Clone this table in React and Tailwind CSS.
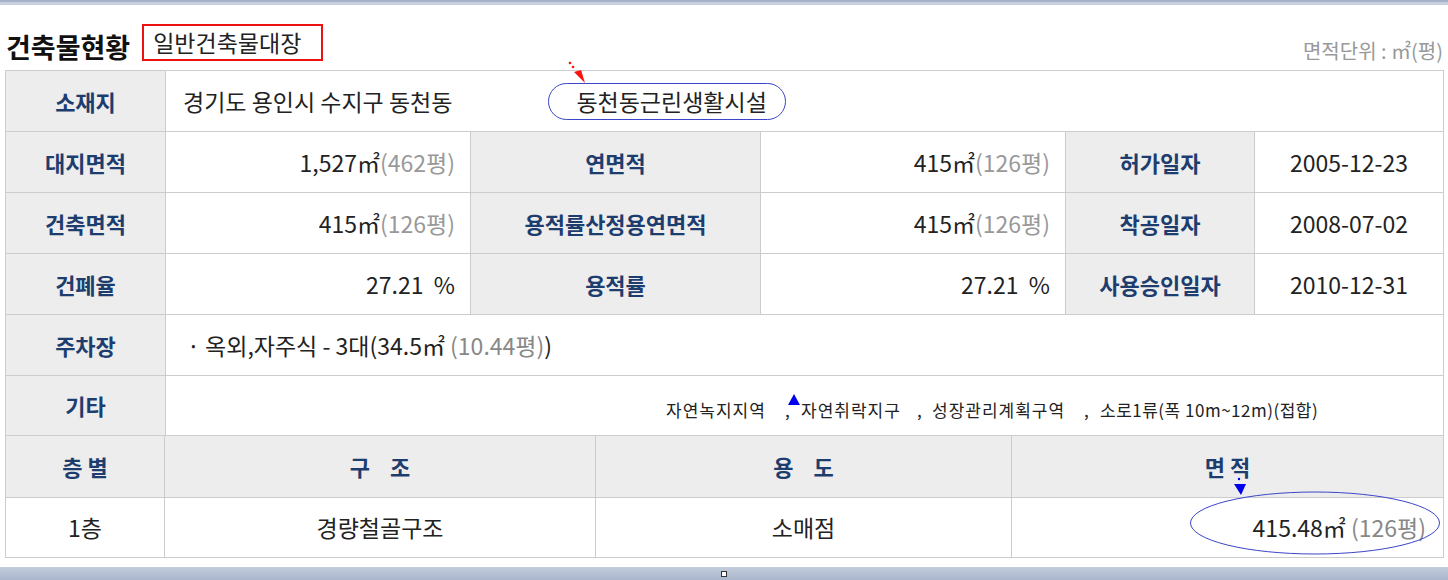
import React from 'react';

const FONT = { fontFamily: '"Noto Sans CJK KR", "Noto Sans", sans-serif' };

const Th = ({ children, className = '', ...rest }) => (
    <td {...rest} className={`border border-[#cccccc] bg-[#ededed] text-center text-[22px] font-bold text-[#1d3d6f] ${className}`}>
        {children}
    </td>
);

const Td = ({ children, className = '', ...rest }) => (
    <td {...rest} className={`border border-[#cccccc] bg-white text-[23px] text-[#222222] ${className}`}>
        {children}
    </td>
);

const Area = ({ m2, py }) => (
    <>
        {m2}㎡<span className="text-[#999999]">({py}평)</span>
    </>
);

const Annotations = () => (
    <svg className="pointer-events-none absolute left-0 top-0" width="1448" height="580">
        {/* red dotted arrow */}
        <circle cx="570" cy="63" r="1.3" fill="#ff1010" />
        <circle cx="573" cy="67" r="1.3" fill="#ff1010" />
        <polygon points="574,72 581,70 585,83" fill="#ff1010" />
        {/* ellipse around 동천동근린생활시설 */}
        <rect x="548.5" y="83.5" width="237" height="36" rx="18" ry="18" fill="none" stroke="#3b45c9" strokeWidth="1" />
        {/* blue triangle in 기타 */}
        <polygon points="794,394 788,405 800,405" fill="#0000ee" />
        {/* blue arrow to area */}
        <circle cx="1239" cy="479" r="1.2" fill="#0000ee" />
        <polygon points="1234,484 1246,484 1241,495" fill="#0000ee" />
        {/* ellipse around area */}
        <ellipse cx="1315" cy="523" rx="124.5" ry="31" fill="none" stroke="#3b45c9" strokeWidth="1" />
    </svg>
);

const App = () => {
    return (
        <div className="relative h-[580px] w-[1448px] overflow-hidden bg-white" style={FONT}>
            {/* top strip */}
            <div className="h-[2px] bg-[#a4b1c7]" />
            <div className="h-[3px] bg-[#c6cfdd]" />

            <div className="px-[5px]">
                {/* title row */}
                <div className="flex h-[65px] items-end justify-between pb-[10px]">
                    <div className="flex items-end">
                        <h2 className="ml-[1px] text-[27px] font-bold leading-none text-[#111111]">건축물현황</h2>
                        <div className="mb-[-1px] ml-[12px] flex h-[37px] w-[181px] items-center border-2 border-[#ee1111] pl-[9px] text-[23px] text-[#222222]">
                            일반건축물대장
                        </div>
                    </div>
                    <div className="mb-[-1px] text-[20px] leading-none text-[#999999]">면적단위 : ㎡(평)</div>
                </div>

                {/* main table */}
                <table className="w-[1438px] table-fixed border-collapse">
                    <colgroup>
                        <col className="w-[160px]" />
                        <col className="w-[305px]" />
                        <col className="w-[290px]" />
                        <col className="w-[305px]" />
                        <col className="w-[189px]" />
                        <col className="w-[189px]" />
                    </colgroup>
                    <tbody>
                        <tr className="h-[61px]">
                            <Th>소재지</Th>
                            <Td className="pl-[17px]" colSpan={5}>
                                경기도 용인시 수지구 동천동
                                <span className="ml-[124px]">동천동근린생활시설</span>
                            </Td>
                        </tr>
                        <tr className="h-[61px]">
                            <Th>대지면적</Th>
                            <Td className="pr-[15px] text-right"><Area m2="1,527" py="462" /></Td>
                            <Th>연면적</Th>
                            <Td className="pr-[15px] text-right"><Area m2="415" py="126" /></Td>
                            <Th>허가일자</Th>
                            <Td className="text-center">2005-12-23</Td>
                        </tr>
                        <tr className="h-[61px]">
                            <Th>건축면적</Th>
                            <Td className="pr-[15px] text-right"><Area m2="415" py="126" /></Td>
                            <Th>용적률산정용연면적</Th>
                            <Td className="pr-[15px] text-right"><Area m2="415" py="126" /></Td>
                            <Th>착공일자</Th>
                            <Td className="text-center">2008-07-02</Td>
                        </tr>
                        <tr className="h-[61px]">
                            <Th>건폐율</Th>
                            <Td className="pr-[15px] text-right">27.21&nbsp;&nbsp;%</Td>
                            <Th>용적률</Th>
                            <Td className="pr-[15px] text-right">27.21&nbsp;&nbsp;%</Td>
                            <Th>사용승인일자</Th>
                            <Td className="text-center">2010-12-31</Td>
                        </tr>
                        <tr className="h-[61px]">
                            <Th>주차장</Th>
                            <Td className="pl-[21px]" colSpan={5}>
                                · 옥외,자주식 - 3대(34.5㎡ <span className="text-[#888888]">(10.44평)</span>)
                            </Td>
                        </tr>
                        <tr className="h-[60px]">
                            <Th>기타</Th>
                            <td colSpan={5} className="border border-[#cccccc] bg-white pt-[8px] text-[17px] text-[#222222]">
                                <div className="flex pl-[500px] tracking-[1px]">
                                    <span className="w-[119px]">자연녹지지역</span>
                                    <span className="w-[16px]">,</span>
                                    <span className="w-[116px]">자연취락지구</span>
                                    <span className="w-[15px]">,</span>
                                    <span className="w-[152px]">성장관리계획구역</span>
                                    <span className="w-[16px]">,</span>
                                    <span className="tracking-[0.5px]">소로1류(폭 10m~12m)(접합)</span>
                                </div>
                            </td>
                        </tr>
                    </tbody>
                </table>

                {/* floor table */}
                <table className="w-[1438px] table-fixed border-collapse">
                    <colgroup>
                        <col className="w-[159px]" />
                        <col className="w-[431px]" />
                        <col className="w-[416px]" />
                        <col className="w-[432px]" />
                    </colgroup>
                    <tbody>
                        <tr className="h-[61px]">
                            <Th className="border-t-0">층 별</Th>
                            <Th className="border-t-0">구&nbsp;&nbsp;&nbsp;&nbsp;조</Th>
                            <Th className="border-t-0">용&nbsp;&nbsp;&nbsp;&nbsp;도</Th>
                            <Th className="border-t-0">면&nbsp;적</Th>
                        </tr>
                        <tr className="h-[60px]">
                            <Td className="text-center">1층</Td>
                            <Td className="text-center">경량철골구조</Td>
                            <Td className="text-center">소매점</Td>
                            <Td className="pr-[17px] text-right">
                                415.48㎡ <span className="text-[#888888]">(126평)</span>
                            </Td>
                        </tr>
                    </tbody>
                </table>
            </div>

            {/* bottom strip */}
            <div className="absolute bottom-0 left-0 h-[13px] w-full bg-gradient-to-b from-[#c3cddc] to-[#a9b6cb]">
                <div className="mx-auto mt-[4px] h-[6px] w-[6px] border border-[#333333] bg-white" />
            </div>

            <Annotations />
        </div>
    );
};

export default App;
